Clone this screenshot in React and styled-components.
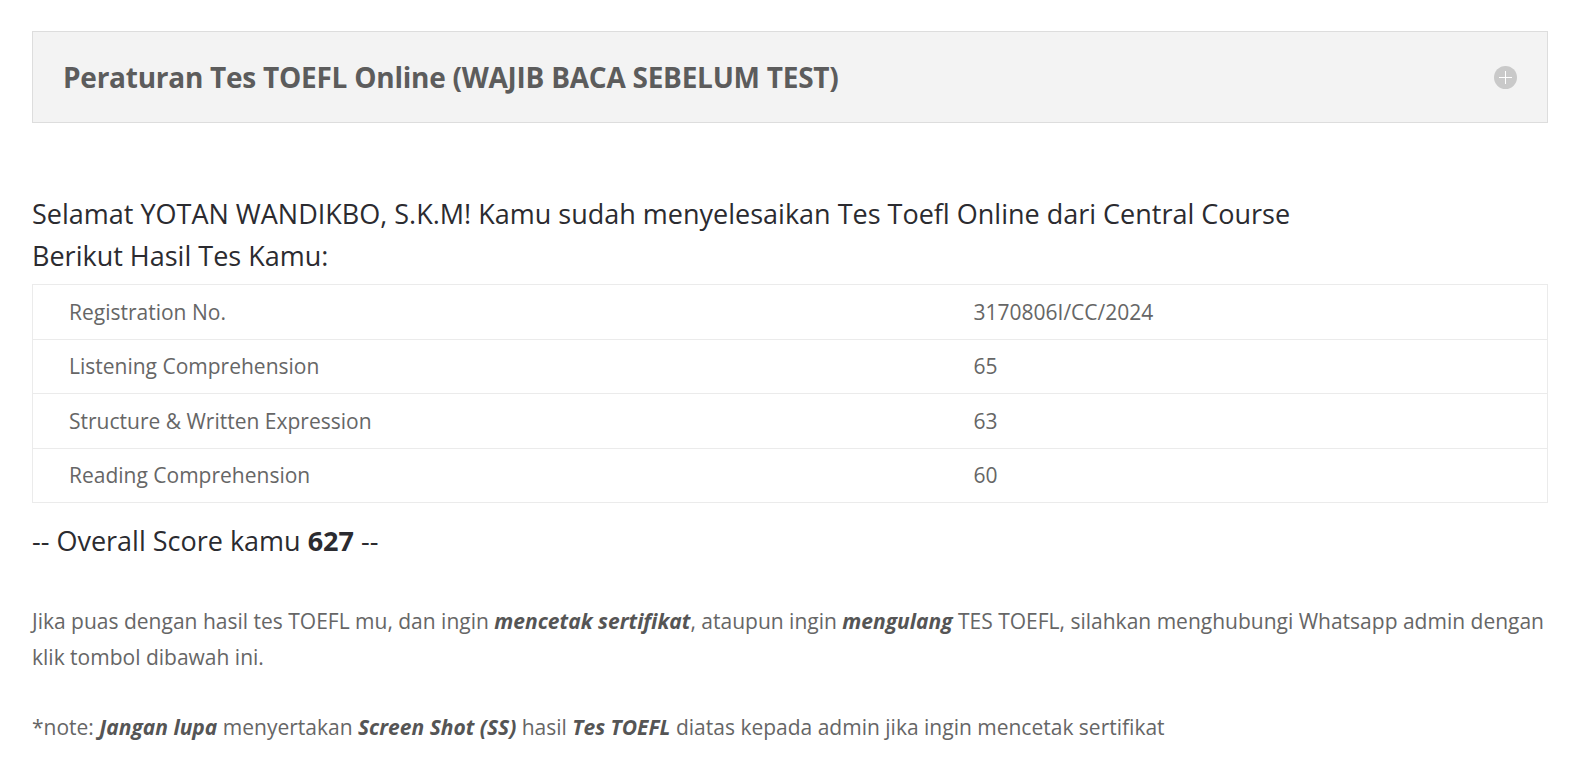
import React from 'react';
import styled, { createGlobalStyle } from 'styled-components';

const GlobalStyle = createGlobalStyle`
  body {
    margin: 0;
    background: #FFFFFF;
    font-family: "Open Sans", "Liberation Sans", sans-serif;
  }
`;

const Page = styled.div`
  padding: 31px 40px 40px 32px;
`;

const Accordion = styled.div`
  background: #F3F3F3;
  border: 1px solid #DDDDDD;
  height: 92px;
  box-sizing: border-box;

  display: flex;
  align-items: center;
  justify-content: space-between;

  padding: 0 30px 0 30px;
`;

const AccordionTitle = styled.h2`
  margin: 0;
  font-size: 28px;
  font-weight: 700;
  letter-spacing: -0.25px;
  color: #5C5C5C;
`;

const PlusIcon = styled.span`
  width: 23px;
  height: 23px;
  border-radius: 50%;
  background: #C9C9C9;
  display: flex;
  align-items: center;
  justify-content: center;
`;

const Greeting = styled.div`
  margin-top: 70px;
  font-size: 27px;
  line-height: 42px;
  color: #2B2B30;
`;

const Table = styled.table`
  width: 100%;
  margin-top: 7px;
  border-collapse: collapse;
  border: 1px solid #EBEBEB;
  font-size: 21px;
  color: #666666;
`;

const Row = styled.tr`
  border-bottom: 1px solid #EBEBEB;
  height: 54.5px;
`;

const Cell = styled.td`
  padding: 0 36px;
  vertical-align: middle;
  width: ${p => (p.$label ? '905px' : 'auto')};
  box-sizing: border-box;
`;

const Overall = styled.div`
  margin-top: 17px;
  font-size: 27px;
  line-height: 42px;
  color: #2B2B30;
`;

const Paragraph = styled.p`
  margin: ${p => p.$first ? '42px 0 0' : '35px 0 0'};
  font-size: 21px;
  line-height: 35.5px;
  color: #666666;

  b {
    font-style: italic;
    font-weight: 700;
    color: #555555;
  }
`;

const results = [
  ['Registration No.', '3170806I/CC/2024'],
  ['Listening Comprehension', '65'],
  ['Structure & Written Expression', '63'],
  ['Reading Comprehension', '60'],
];

export default function App() {
  return (
    <Page>
      <GlobalStyle />
      <Accordion>
        <AccordionTitle>Peraturan Tes TOEFL Online (WAJIB BACA SEBELUM TEST)</AccordionTitle>
        <PlusIcon>
          <svg width="13" height="13" viewBox="0 0 13 13">
            <path d="M6.5 0v13M0 6.5h13" stroke="#FFFFFF" strokeWidth="1" />
          </svg>
        </PlusIcon>
      </Accordion>

      <Greeting>
        Selamat YOTAN WANDIKBO, S.K.M! Kamu sudah menyelesaikan Tes Toefl Online dari Central Course
        <br />
        Berikut Hasil Tes Kamu:
      </Greeting>

      <Table>
        <tbody>
          {results.map(([label, value]) => (
            <Row key={label}>
              <Cell $label>{label}</Cell>
              <Cell>{value}</Cell>
            </Row>
          ))}
        </tbody>
      </Table>

      <Overall>
        -- Overall Score kamu <strong>627</strong> --
      </Overall>

      <Paragraph $first>
        Jika puas dengan hasil tes TOEFL mu, dan ingin <b>mencetak sertifikat</b>, ataupun ingin <b>mengulang</b> TES TOEFL, silahkan menghubungi Whatsapp admin dengan klik tombol dibawah ini.
      </Paragraph>

      <Paragraph>
        *note: <b>Jangan lupa</b> menyertakan <b>Screen Shot (SS)</b> hasil <b>Tes TOEFL</b> diatas kepada admin jika ingin mencetak sertifikat
      </Paragraph>
    </Page>
  );
}
